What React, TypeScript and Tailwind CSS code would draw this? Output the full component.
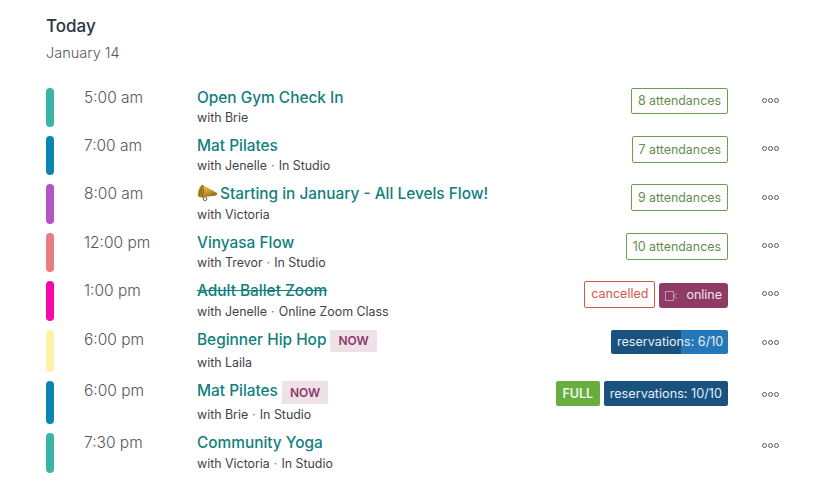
import React from "react";

const font = { fontFamily: "Inter, 'Noto Sans', sans-serif" };

function Megaphone() {
  return (
    <svg width="21" height="18" viewBox="0 0 21 18" className="shrink-0 block">
      <defs>
        <linearGradient id="mg" x1="0" y1="0" x2="0.7" y2="1">
          <stop offset="0" stopColor="#f4d766" />
          <stop offset="0.55" stopColor="#d3a233" />
          <stop offset="1" stopColor="#8a6518" />
        </linearGradient>
      </defs>
      <path d="M6 13 L9 13 L10 15.5 Q8 17.5 6.5 16 Z" fill="none" stroke="#6b5a30" strokeWidth="1" />
      <path d="M5 0.5 L20 9 Q20.8 10.8 19 11.5 L3 13.5 Q0.5 13 0.8 9.5 Q1.5 3.5 5 0.5 Z" fill="url(#mg)" />
      <path d="M5.5 1 Q8 6 5 13" fill="none" stroke="#5e4210" strokeWidth="0.8" />
      <path d="M5 1 Q2 4 1.3 10 Q1.4 13 3 13 Q6.5 8 5 1 Z" fill="#9a7319" />
    </svg>
  );
}

function Dots() {
  return (
    <div className="flex w-[17px] gap-[1px] shrink-0">
      {[0, 1, 2].map((i) => (
        <span key={i} className="w-[5px] h-[5px] rounded-full border border-[#55595f]" />
      ))}
    </div>
  );
}

function Attend({ n, h = "h-[27px] pt-[1px]" }: { n: number; h?: string }) {
  return (
    <span className={`${h} flex items-center px-[6px] border border-[#6a9f4e] rounded-[2px] text-[12.4px] text-[#5f8f4b]`}>
      {n} attendances
    </span>
  );
}

function Now({ h }: { h: string }) {
  return (
    <span className={`ml-[4px] ${h} flex items-center px-[8px] bg-[#efe1e8] text-[12px] font-semibold text-[#8d3b66]`}>
      NOW
    </span>
  );
}

function Row({
  color,
  time,
  title,
  teacher,
  place,
  h,
  subGap,
  dotsTop = "pt-[10px]",
  titleExtra,
  lead,
  strike,
  right,
}: {
  color: string;
  time: string;
  title: string;
  teacher: string;
  place?: string;
  h: string;
  subGap: string;
  dotsTop?: string;
  titleExtra?: React.ReactNode;
  lead?: React.ReactNode;
  strike?: boolean;
  right?: React.ReactNode;
}) {
  return (
    <div className={`flex ${h}`}>
      <div className={`w-[8px] rounded-[4px] shrink-0 ${color}`} />
      <div className="w-[143px] pl-[30px] pt-[1px] shrink-0 text-[15.5px] leading-[18px] text-[#55585d] font-[350]">{time}</div>
      <div className="w-[323px] shrink-0">
        <div className="flex items-start">
          {lead}
          <span className={`text-[15.4px] leading-[19px] font-medium text-[#11807c] whitespace-nowrap ${strike ? "line-through" : ""}`}>
            {title}
          </span>
          {titleExtra}
        </div>
        <div className={`${subGap} flex text-[12.4px] leading-[16px] text-[#3f4349] whitespace-nowrap`}>
          <span>{teacher}</span>
          {place && <span className="mx-[4px] text-[#7d8085]">·</span>}
          {place && <span>{place}</span>}
        </div>
      </div>
      <div className="w-[208px] shrink-0 flex justify-end items-start gap-[4px]">{right}</div>
      <div className={`ml-[34px] ${dotsTop}`}>
        <Dots />
      </div>
    </div>
  );
}

export default function App() {
  return (
    <div className="w-[815px] h-[497px] bg-white pl-[46px] pt-[16px] overflow-hidden" style={font}>
      <div className="text-[17px] leading-[21px] font-medium text-[#2a3442]">Today</div>
      <div className="mt-[7px] text-[14.5px] leading-[18px] text-[#55585d] font-[350]">January 14</div>
      <div className="mt-[26px] flex flex-col">
        <Row
          color="bg-[#39b5a7]"
          time="5:00 am"
          title="Open Gym Check In"
          teacher="with Brie"
          h="h-[39px] mb-[9px]"
          subGap="mt-[3px]"
          right={<Attend n={8} h="h-[26px]" />}
        />
        <Row
          color="bg-[#0b85b1]"
          time="7:00 am"
          title="Mat Pilates"
          teacher="with Jenelle"
          place="In Studio"
          h="h-[39px] mb-[9px]"
          subGap="mt-[3px]"
          right={<Attend n={7} />}
        />
        <Row
          color="bg-[#b455c6]"
          time="8:00 am"
          title="Starting in January - All Levels Flow!"
          teacher="with Victoria"
          h="h-[40px] mb-[9px]"
          subGap="mt-[4px]"
          dotsTop="pt-[11px]"
          lead={<span className="mr-[2px]"><Megaphone /></span>}
          right={<Attend n={9} />}
        />
        <Row
          color="bg-[#e97c7c]"
          time="12:00 pm"
          title="Vinyasa Flow"
          teacher="with Trevor"
          place="In Studio"
          h="h-[39px] mb-[9px]"
          subGap="mt-[3px]"
          right={<Attend n={10} />}
        />
        <Row
          color="bg-[#f707a9]"
          time="1:00 pm"
          title="Adult Ballet Zoom"
          teacher="with Jenelle"
          place="Online Zoom Class"
          h="h-[40px] mb-[9px]"
          subGap="mt-[4px]"
          strike
          right={
            <>
              <span className="h-[27px] flex items-center px-[6px] border border-[#d4583f] rounded-[2px] text-[12.5px] text-[#d4583f]">
                cancelled
              </span>
              <span className="mt-[2px] h-[25px] flex items-center px-[6px] gap-[8px] bg-[#8e3b66] rounded-[3px] text-[12.5px] text-[#f3e4ec]">
                <svg width="13" height="10" viewBox="0 0 13 10" fill="none" stroke="#c793ad" strokeWidth="1">
                  <rect x="0.5" y="0.5" width="8" height="9" />
                  <path d="M9 5 L12 2 M9 5 L12 8" />
                </svg>
                online
              </span>
            </>
          }
        />
        <Row
          color="bg-[#fcf2a5]"
          time="6:00 pm"
          title="Beginner Hip Hop"
          teacher="with Laila"
          h="h-[42px] mb-[9px]"
          subGap="mt-[3px]"
          titleExtra={<Now h="h-[22px]" />}
          right={
            <span className="h-[24px] flex items-center w-[117px] pl-[6px] rounded-[2px] text-[12.6px] text-[#e3eef6] whitespace-nowrap bg-[linear-gradient(90deg,#1a527f_0,#1a527f_60%,#2478b8_60%,#2478b8_100%)]">
              reservations: 6/10
            </span>
          }
        />
        <Row
          color="bg-[#0b85b1]"
          time="6:00 pm"
          title="Mat Pilates"
          teacher="with Brie"
          place="In Studio"
          h="h-[43px] mb-[9px]"
          subGap="mt-[3px]"
          dotsTop="pt-[11px]"
          titleExtra={<Now h="h-[23px]" />}
          right={
            <>
              <span className="h-[25px] pt-[1px] flex items-center px-[6.5px] rounded-[2px] bg-[#67ae3f] text-[12.5px] font-semibold text-[#f2f8ec]">
                FULL
              </span>
              <span className="h-[25px] pt-[1px] flex items-center px-[6px] rounded-[2px] bg-[#1a527f] text-[12.7px] text-[#e3eef6] whitespace-nowrap">
                reservations: 10/10
              </span>
            </>
          }
        />
        <Row
          color="bg-[#39b5a7]"
          time="7:30 pm"
          title="Community Yoga"
          teacher="with Victoria"
          place="In Studio"
          h="h-[40px]"
          subGap="mt-[4px]"
        />
      </div>
    </div>
  );
}
